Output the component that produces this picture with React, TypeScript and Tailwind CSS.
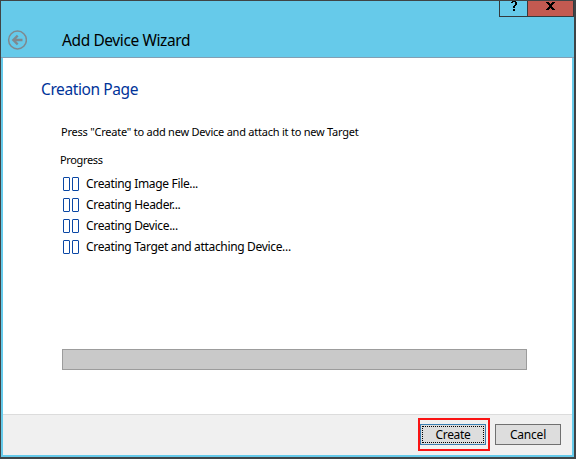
const steps = [
  "Creating Image File...",
  "Creating Header...",
  "Creating Device...",
  "Creating Target and attaching Device...",
];

function BackIcon() {
  return (
    <svg width="20" height="20" viewBox="0 0 20 20" fill="none" stroke="#7f898f">
      <circle cx="10.5" cy="10" r="8.9" strokeWidth="1.5" />
      <path d="M15.5 10H6.5M10.7 5.6L6.3 10l4.4 4.4" strokeWidth="2.3" />
    </svg>
  );
}

function HelpGlyph() {
  return (
    <svg width="6" height="10" viewBox="0 0 6 10" fill="#000" shapeRendering="crispEdges">
      <path d="M1 0h4v1H1zM0 1h2v1H0zM4 1h2v3H4zM3 4h2v1H3zM2 5h2v2H2zM2 8h2v2H2z" />
    </svg>
  );
}

function CloseGlyph() {
  return (
    <svg width="9" height="8" viewBox="0 0 9 8" fill="#000" shapeRendering="crispEdges">
      <path d="M0 0h3v1H0zM6 0h3v1H6zM1 1h3v1H1zM5 1h3v1H5zM2 2h5v1H2zM3 3h3v2H3zM2 5h5v1H2zM1 6h3v1H1zM5 6h3v1H5zM0 7h3v1H0zM6 7h3v1H6z" />
    </svg>
  );
}

export default function App() {
  return (
    <div className="flex h-[459px] w-[576px] flex-col overflow-hidden border-t border-r-2 border-b-2 border-l border-[#3f4446] bg-[#66caea] font-['Noto_Sans','Open_Sans',sans-serif] text-black">
      <header className="flex h-[57px] shrink-0 flex-col border-b border-[#829fb4]">
        <div className="flex h-4 justify-end">
          <div className="flex h-4 w-7 justify-center border-b border-l border-[#343a3e]">
            <HelpGlyph />
          </div>
          <div className="flex h-4 w-[47px] justify-center border-x border-b border-[#343a3e] bg-[#c35a51] pt-px">
            <CloseGlyph />
          </div>
        </div>
        <div className="flex h-10 items-center pt-[6px] pl-[6px]">
          <BackIcon />
          <h1 className="ml-[35px] text-[15.5px] leading-5 tracking-[-0.4px] whitespace-nowrap">Add Device Wizard</h1>
        </div>
      </header>
      <div className="mr-[2px] mb-[2px] ml-[2px] flex min-h-0 grow flex-col bg-white">
        <main className="flex h-[356px] shrink-0 flex-col pl-[38px]">
          <h2 className="mt-[21px] h-5 text-[15.5px] leading-5 tracking-[-0.4px] text-[#003399]">Creation Page</h2>
          <p className="mt-[25px] ml-5 h-4 text-[11px] leading-4 tracking-[-0.23px] whitespace-nowrap">
            Press "Create" to add new Device and attach it to new Target
          </p>
          <p className="mt-3 ml-[19px] h-4 text-[11px] leading-4 tracking-[-0.35px]">Progress</p>
          <ul className="mt-[5px] ml-[22px]">
            {steps.map((step) => (
              <li key={step} className="flex h-[21px] items-center">
                <span className="mt-px flex gap-[2px]">
                  <i className="h-[14px] w-[7px] rounded-[1px] border border-[#0a47a5]" />
                  <i className="h-[14px] w-[7px] rounded-[1px] border border-[#0a47a5]" />
                </span>
                <span className="mt-px ml-[7px] text-[12px] leading-4 tracking-[-0.33px] whitespace-nowrap">{step}</span>
              </li>
            ))}
          </ul>
          <div className="mt-[92px] ml-[21px] h-[21px] w-[465px] border border-[#9c9c9c] bg-[#c9c9c9]" />
        </main>
        <footer className="flex grow items-start justify-end border-t border-[#dcdcdc] bg-[#f0f0f0] pt-[3px] pr-[11px]">
          <div className="h-[33px] w-[72px] border-2 border-[#fa1414] pt-1">
            <button className="flex h-[21px] w-[66px] border border-[#3c7fb1] bg-[#dddddd] p-px">
              <span className="flex h-full w-full items-center justify-center border border-dotted border-black text-[12px] leading-4 tracking-[-0.35px]">
                Create
              </span>
            </button>
          </div>
          <button className="mt-[6px] ml-[5px] flex h-[21px] w-[66px] items-center justify-center border border-[#707070] bg-[#dddddd] text-[12px] leading-4 tracking-[-0.2px]">
            Cancel
          </button>
        </footer>
      </div>
    </div>
  );
}
